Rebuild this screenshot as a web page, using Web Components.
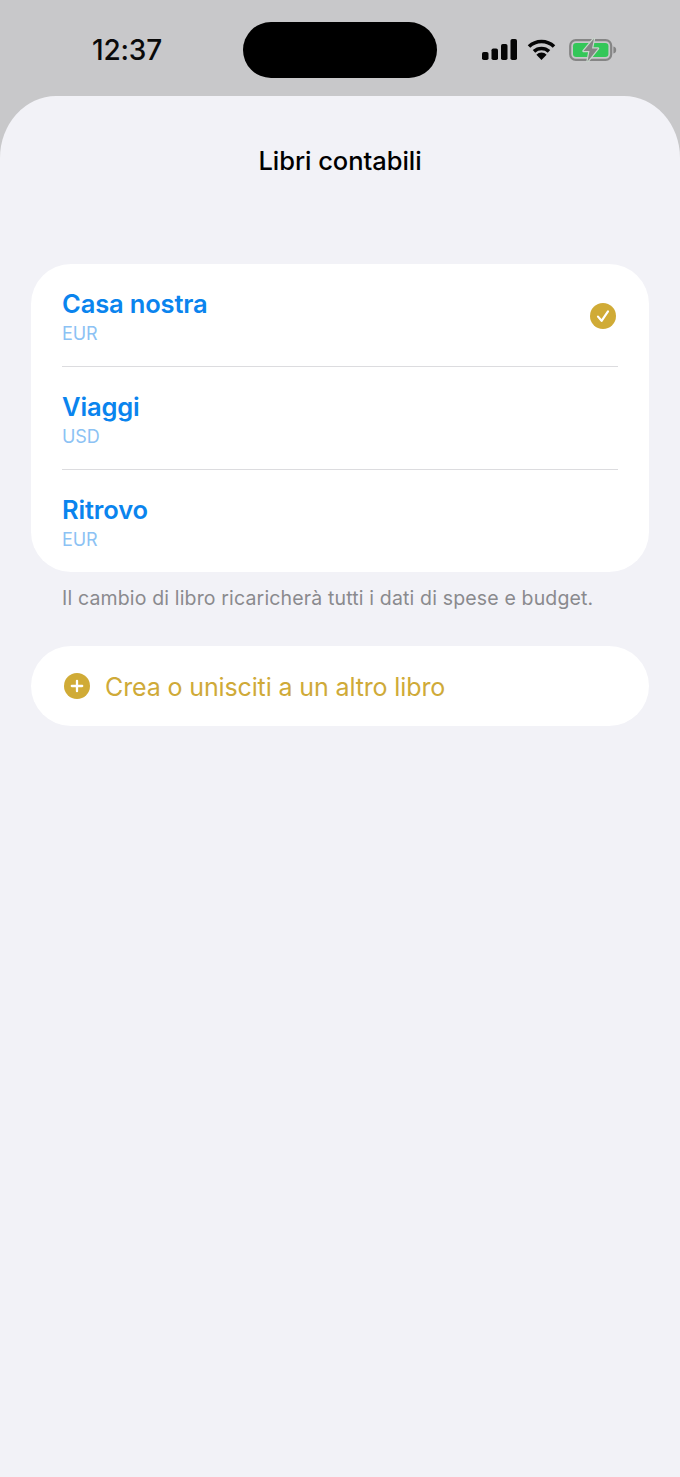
<!DOCTYPE html>
<html lang="it">
<head>
<meta charset="utf-8">
<title>Libri contabili</title>
<style>
  html, body { margin: 0; height: 100%; }
  body { background: #c8c8ca; font-family: Inter, "Liberation Sans", sans-serif; }
</style>
</head>
<body>
<app-status-bar time="12:37"></app-status-bar>
<app-sheet heading="Libri contabili">
  <app-card>
    <app-book name="Casa nostra" currency="EUR" selected></app-book>
    <app-book name="Viaggi" currency="USD"></app-book>
    <app-book name="Ritrovo" currency="EUR"></app-book>
  </app-card>
  <app-note>Il cambio di libro ricaricherà tutti i dati di spese e budget.</app-note>
  <app-action>Crea o unisciti a un altro libro</app-action>
</app-sheet>

<script>
class AppStatusBar extends HTMLElement{
  constructor(){
    super()
    this.shadow = this.attachShadow({mode: 'open'})
  }
  connectedCallback(){
    this.shadow.innerHTML = `
      <style>
        :host{ display:block; height:96px; }
        #bar{ display:grid; grid-template-columns:243px 194px 1fr; height:96px; padding-top:22px; box-sizing:border-box; }
        #time{ font-size:28px; font-weight:500; color:#0a0a0a; text-align:center; line-height:56px; padding-left:11px; letter-spacing:-.2px; }
        #island{ width:194px; height:56px; border-radius:28px; background:#000; }
        #icons{ display:flex; align-items:center; height:56px; padding-left:45px; gap:10px; }
        svg{ display:block; }
      </style>
      <div id="bar">
        <div id="time"></div>
        <div id="island"></div>
        <div id="icons">
          <svg width="35" height="22" viewBox="0 0 35 22" fill="#050505">
            <rect x="0" y="13" width="6.5" height="8" rx="1.8"/>
            <rect x="9.5" y="9.5" width="6.5" height="11.5" rx="1.8"/>
            <rect x="19" y="5" width="6.5" height="16" rx="1.8"/>
            <rect x="28.5" y="0" width="6.5" height="21" rx="1.8"/>
          </svg>
          <svg width="29" height="22" viewBox="0 0 29 22">
            <path d="M2 7.5 A18 18 0 0 1 27 7.5" fill="none" stroke="#050505" stroke-width="3.6"/>
            <path d="M7 12.4 A11 11 0 0 1 22 12.4" fill="none" stroke="#050505" stroke-width="3.6"/>
            <path d="M14.5 21 L9.4 15.8 A7 7 0 0 1 19.6 15.8 Z" fill="#050505"/>
          </svg>
          <svg width="48" height="24" viewBox="0 0 48 24" style="margin-left:3px">
            <rect x="1.2" y="2.2" width="41" height="19.6" rx="5.6" fill="none" stroke="#858585" stroke-width="2.2"/>
            <rect x="4" y="5" width="35.4" height="14" rx="3.2" fill="#34c759"/>
            <path d="M44.4 8.5 C46.4 9 47.2 10.4 47.2 12 C47.2 13.6 46.4 15 44.4 15.5 Z" fill="#858585"/>
            <path d="M25 .5 L14.5 13 H20.5 L18.5 23.5 L29 10.5 H23 Z" fill="#858585" stroke="#c9d6cc" stroke-width="2.4" stroke-linejoin="round" paint-order="stroke"/>
          </svg>
        </div>
      </div>
    `
    this.shadow.querySelector('#time').textContent = this.getAttribute('time')
  }
}

class AppSheet extends HTMLElement{
  constructor(){
    super()
    this.shadow = this.attachShadow({mode: 'open'})
  }
  connectedCallback(){
    this.shadow.innerHTML = `
      <style>
        :host{ display:block; }
        #sheet{ background:#f2f2f7; border-radius:56px 56px 0 0 / 62px 62px 0 0; height:1381px; padding:0 31px; box-sizing:border-box; }
        h1{ margin:0; padding-top:47px; height:168px; box-sizing:border-box; font-size:25.5px; line-height:36px; font-weight:550; color:#000; text-align:center; letter-spacing:-.05px; }
      </style>
      <div id="sheet">
        <h1></h1>
        <slot></slot>
      </div>
    `
    this.shadow.querySelector('h1').textContent = this.getAttribute('heading')
  }
}

class AppCard extends HTMLElement{
  constructor(){
    super()
    this.attachShadow({mode: 'open'}).innerHTML = `
      <style>
        :host{ display:block; background:#fff; border-radius:40px; padding:0 31px; }
      </style>
      <slot></slot>
    `
  }
}

class AppBook extends HTMLElement{
  constructor(){
    super()
    this.shadow = this.attachShadow({mode: 'open'})
  }
  connectedCallback(){
    const check = this.hasAttribute('selected') ? `
      <svg width="26" height="26" viewBox="0 0 26 26">
        <circle cx="13" cy="13" r="13" fill="#d0ab36"/>
        <path d="M8 13.6 L11.6 17.8 L18 8.4" fill="none" stroke="#fff" stroke-width="2.2" stroke-linecap="round" stroke-linejoin="round"/>
      </svg>` : ''
    this.shadow.innerHTML = `
      <style>
        :host{ display:block; }
        :host(:not(:last-child)) #row{ border-bottom:1px solid #dcdcdf; }
        #row{ display:flex; align-items:center; justify-content:space-between; box-sizing:border-box; height:103px; padding-right:2px; }
        :host(:last-child) #row{ height:102px; }
        #name{ font-size:25.5px; line-height:30px; font-weight:600; color:#0a84ee; letter-spacing:-.15px; }
        #currency{ font-size:18px; line-height:24px; margin-top:3px; color:#8cc2f4; letter-spacing:-.1px; }
        #texts{ padding-top:4px; }
        svg{ margin-top:1px; }
      </style>
      <div id="row">
        <div id="texts">
          <div id="name"></div>
          <div id="currency"></div>
        </div>
        ${check}
      </div>
    `
    this.shadow.querySelector('#name').textContent = this.getAttribute('name')
    this.shadow.querySelector('#currency').textContent = this.getAttribute('currency')
  }
}

class AppNote extends HTMLElement{
  constructor(){
    super()
    this.attachShadow({mode: 'open'}).innerHTML = `
      <style>
        :host{ display:block; padding:13px 31px 0; height:74px; box-sizing:border-box; font-size:19.5px; line-height:26px; color:#8a8a8e; letter-spacing:.155px; white-space:nowrap; }
      </style>
      <slot></slot>
    `
  }
}

class AppAction extends HTMLElement{
  constructor(){
    super()
    this.attachShadow({mode: 'open'}).innerHTML = `
      <style>
        :host{ display:flex; align-items:center; gap:15px; height:80px; padding-left:33px; background:#fff; border-radius:40px; font-size:25px; color:#cfaa38; letter-spacing:-.13px; }
        svg{ flex:none; }
        span{ padding-top:2px; }
      </style>
      <svg width="26" height="26" viewBox="0 0 26 26">
        <circle cx="13" cy="13" r="13" fill="#d0ab36"/>
        <path d="M13 7.8 V18.2 M7.8 13 H18.2" stroke="#fff" stroke-width="2.3" stroke-linecap="round"/>
      </svg>
      <span><slot></slot></span>
    `
  }
}

customElements.define('app-status-bar', AppStatusBar)
customElements.define('app-sheet', AppSheet)
customElements.define('app-card', AppCard)
customElements.define('app-book', AppBook)
customElements.define('app-note', AppNote)
customElements.define('app-action', AppAction)
</script>
</body>
</html>
